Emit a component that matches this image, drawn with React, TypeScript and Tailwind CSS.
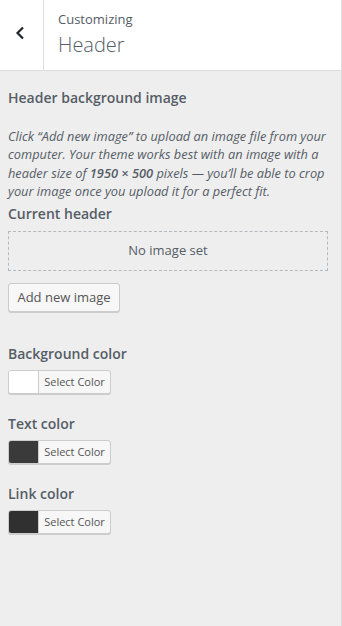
import React from "react";

function ColorPicker({ swatch }: { swatch: string }) {
  return (
    <div className="mt-[6px] flex h-[24px] w-[103px] overflow-hidden rounded-[3px] border border-[#cccccc] bg-[#f7f7f7] shadow-[0_1px_0_#cccccc]">
      <div className="h-full w-[30px] border-r border-[#cccccc]" style={{ backgroundColor: swatch }} />
      <div className="flex flex-1 items-center justify-center text-[11px] text-[#555555]">Select Color</div>
    </div>
  );
}

export default function App() {
  return (
    <div className="h-[626px] w-[342px] border-r border-[#dddddd] bg-[#eeeeee] font-['Open_Sans','Noto_Sans',sans-serif] text-[#555d66]">
      <div className="flex h-[71px] border-b border-[#dddddd] bg-white">
        <div className="flex w-[44px] items-center justify-center border-r border-[#dddddd] pr-[4px]">
          <svg width="10" height="14" viewBox="0 0 10 14" className="mt-[-4px]">
            <path d="M8 1.5 L2.5 7 L8 12.5" fill="none" stroke="#23282d" strokeWidth="2.2" />
          </svg>
        </div>
        <div className="flex flex-col pl-[14px] pt-[9px]">
          <span className="text-[13px] leading-[20px] text-[#555d66]">Customizing</span>
          <span className="mt-[2px] text-[20px] font-light leading-[28px] text-[#555d66]">Header</span>
        </div>
      </div>
      <div className="pl-[8px] pr-[13px] pt-[17px]">
        <div className="text-[14px] font-semibold leading-[20px]">Header background image</div>
        <p className="mt-[19px] text-[12.8px] italic leading-[18.3px]">
          Click “Add new image” to upload an image file from your computer. Your theme works best with an image with a header size of{" "}
          <b className="font-semibold">1950 × 500</b> pixels — you’ll be able to crop your image once you upload it for a perfect fit.
        </p>
        <div className="mt-[4px] text-[14px] font-semibold leading-[20px]">Current header</div>
        <div className="mt-[7px] flex h-[40px] items-center justify-center border border-dashed border-[#b4b9be] text-[13px]">
          No image set
        </div>
        <button className="mt-[12px] h-[29px] w-[112px] rounded-[3px] border border-[#cccccc] bg-[#f7f7f7] text-[13px] text-[#555555] shadow-[0_1px_0_#cccccc]">
          Add new image
        </button>
        <div className="mt-[32px] text-[14px] font-semibold leading-[20px]">Background color</div>
        <ColorPicker swatch="#ffffff" />
        <div className="mt-[20px] text-[14px] font-semibold leading-[20px]">Text color</div>
        <ColorPicker swatch="#3a3a3a" />
        <div className="mt-[20px] text-[14px] font-semibold leading-[20px]">Link color</div>
        <ColorPicker swatch="#303030" />
      </div>
    </div>
  );
}
